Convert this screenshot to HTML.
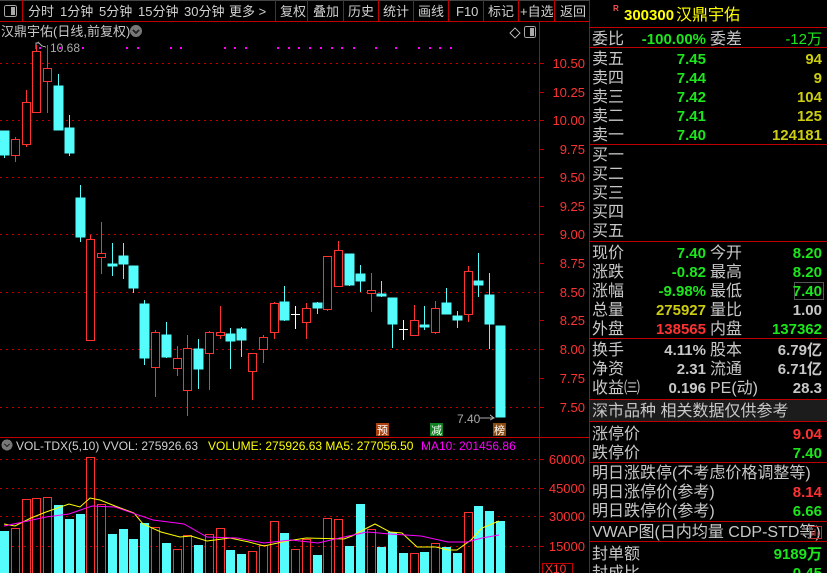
<!DOCTYPE html>
<html><head><meta charset="utf-8"><style>
html,body{margin:0;padding:0;background:#000;width:827px;height:573px;overflow:hidden}
svg{display:block}
text{font-family:"Liberation Sans","Noto Sans CJK SC",sans-serif}
</style></head><body>
<svg width="827" height="573" viewBox="0 0 827 573" xmlns="http://www.w3.org/2000/svg" shape-rendering="crispEdges" overflow="hidden">
<defs><clipPath id="c"><rect width="827" height="573"/></clipPath></defs>
<g clip-path="url(#c)">
<rect width="827" height="573" fill="#000"/>
<line x1="0" y1="0.5" x2="589" y2="0.5" stroke="#444"/>
<line x1="0" y1="21.5" x2="589" y2="21.5" stroke="#c00000"/>
<g stroke="#c00000">
<line x1="22.5" y1="0" x2="22.5" y2="21"/><line x1="275.5" y1="0" x2="275.5" y2="21"/><line x1="307.5" y1="0" x2="307.5" y2="21"/><line x1="343.5" y1="0" x2="343.5" y2="21"/><line x1="378.5" y1="0" x2="378.5" y2="21"/><line x1="413.5" y1="0" x2="413.5" y2="21"/><line x1="448.5" y1="0" x2="448.5" y2="21"/><line x1="483.5" y1="0" x2="483.5" y2="21"/><line x1="518.5" y1="0" x2="518.5" y2="21"/><line x1="554.5" y1="0" x2="554.5" y2="21"/>
</g>
<rect x="4.5" y="5.5" width="12" height="11" rx="2" fill="none" stroke="#aaa"/><rect x="11" y="7" width="4" height="8" fill="#aaa"/>
<g fill="#d0d0d0" font-size="13">
<text x="28" y="16">分时</text><text x="60" y="16">1分钟</text><text x="99" y="16">5分钟</text><text x="138" y="16">15分钟</text><text x="184" y="16">30分钟</text><text x="229" y="16">更多 &gt;</text>
<text x="280" y="16">复权</text><text x="313" y="16">叠加</text><text x="348" y="16">历史</text><text x="383" y="16">统计</text><text x="418" y="16">画线</text><text x="456" y="16">F10</text><text x="488" y="16">标记</text><text x="520" y="16">+自选</text><text x="560" y="16">返回</text>
</g>
<text x="1" y="36" fill="#c8c8c8" font-size="13">汉鼎宇佑(日线,前复权)</text>
<circle cx="136" cy="31" r="6" fill="#777"/><path d="M133 30l3 3 3-3" stroke="#222" stroke-width="1.5" fill="none"/>
<path d="M510 33l5-5 5 5-5 5z" fill="none" stroke="#aaa"/>
<rect x="524.5" y="26.5" width="11" height="11" rx="2" fill="none" stroke="#aaa"/><rect x="530" y="28" width="4" height="8" fill="#aaa"/>
<line x1="539.5" y1="22" x2="539.5" y2="573" stroke="#c00000"/>
<line x1="589.5" y1="0" x2="589.5" y2="573" stroke="#c00000"/>
<line x1="0" y1="437.5" x2="589" y2="437.5" stroke="#c00000"/>
<g stroke="#c00000" stroke-dasharray="2,4">
<line x1="0" y1="63.5" x2="539" y2="63.5"/><line x1="0" y1="120.5" x2="539" y2="120.5"/><line x1="0" y1="177.5" x2="539" y2="177.5"/><line x1="0" y1="234.5" x2="539" y2="234.5"/><line x1="0" y1="292.5" x2="539" y2="292.5"/><line x1="0" y1="349.5" x2="539" y2="349.5"/><line x1="0" y1="407.5" x2="539" y2="407.5"/>
<line x1="0" y1="459.5" x2="539" y2="459.5"/><line x1="0" y1="488.5" x2="539" y2="488.5"/><line x1="0" y1="516.5" x2="539" y2="516.5"/><line x1="0" y1="546.5" x2="539" y2="546.5"/>
</g>
<g stroke="#c00000">
<line x1="539" y1="63.5" x2="544" y2="63.5"/><line x1="539" y1="92.5" x2="544" y2="92.5"/><line x1="539" y1="120.5" x2="544" y2="120.5"/><line x1="539" y1="149.5" x2="544" y2="149.5"/><line x1="539" y1="177.5" x2="544" y2="177.5"/><line x1="539" y1="206.5" x2="544" y2="206.5"/><line x1="539" y1="234.5" x2="544" y2="234.5"/><line x1="539" y1="263.5" x2="544" y2="263.5"/><line x1="539" y1="292.5" x2="544" y2="292.5"/><line x1="539" y1="320.5" x2="544" y2="320.5"/><line x1="539" y1="349.5" x2="544" y2="349.5"/><line x1="539" y1="378.5" x2="544" y2="378.5"/><line x1="539" y1="407.5" x2="544" y2="407.5"/>
<line x1="539" y1="459.5" x2="544" y2="459.5"/><line x1="539" y1="488.5" x2="544" y2="488.5"/><line x1="539" y1="516.5" x2="544" y2="516.5"/><line x1="539" y1="546.5" x2="544" y2="546.5"/>
</g>
<g fill="#ff3232" font-size="13" text-anchor="end">
<text x="585" y="68">10.50</text><text x="585" y="97">10.25</text><text x="585" y="125">10.00</text><text x="585" y="154">9.75</text><text x="585" y="182">9.50</text><text x="585" y="211">9.25</text><text x="585" y="239">9.00</text><text x="585" y="268">8.75</text><text x="585" y="297">8.50</text><text x="585" y="325">8.25</text><text x="585" y="354">8.00</text><text x="585" y="383">7.75</text><text x="585" y="412">7.50</text>
<text x="585" y="464">60000</text><text x="585" y="493">45000</text><text x="585" y="521">30000</text><text x="585" y="551">15000</text>
</g>
<rect x="542.5" y="563.5" width="30" height="12" fill="none" stroke="#c00000"/><text x="545" y="573" fill="#ff3232" font-size="12">X10</text>
<g fill="#ff00ff">
<rect x="39" y="47" width="2" height="2"/><rect x="59" y="47" width="2" height="2"/><rect x="82" y="47" width="2" height="2"/><rect x="126" y="47" width="2" height="2"/><rect x="137" y="47" width="2" height="2"/><rect x="170" y="47" width="2" height="2"/><rect x="180" y="47" width="2" height="2"/><rect x="224" y="47" width="2" height="2"/><rect x="234" y="47" width="2" height="2"/><rect x="245" y="47" width="2" height="2"/><rect x="277" y="47" width="2" height="2"/><rect x="288" y="47" width="2" height="2"/><rect x="298" y="47" width="2" height="2"/><rect x="309" y="47" width="2" height="2"/><rect x="320" y="47" width="2" height="2"/><rect x="331" y="47" width="2" height="2"/><rect x="341" y="47" width="2" height="2"/><rect x="353" y="47" width="2" height="2"/><rect x="375" y="47" width="2" height="2"/><rect x="395" y="47" width="2" height="2"/><rect x="418" y="47" width="2" height="2"/><rect x="429" y="47" width="2" height="2"/><rect x="439" y="47" width="2" height="2"/><rect x="450" y="47" width="2" height="2"/>
</g>
<path d="M36 49v-6h3M38 42l4 4 4 1" stroke="#aaa" fill="none"/>
<text x="50" y="52" fill="#aaa" font-size="12">10.68</text>
<g stroke-width="1">
<g stroke="#ff3232" fill="#000">
<line x1="15.5" y1="137" x2="15.5" y2="162"/><rect x="11.5" y="139.5" width="8" height="16"/>
<line x1="26.5" y1="90" x2="26.5" y2="147"/><rect x="22.5" y="102.5" width="8" height="42"/>
<line x1="36.5" y1="45" x2="36.5" y2="113"/><rect x="32.5" y="51.5" width="8" height="61"/>
<line x1="47.5" y1="45" x2="47.5" y2="113"/><rect x="43.5" y="68.5" width="8" height="13"/>
<line x1="90.5" y1="235" x2="90.5" y2="341"/><rect x="86.5" y="239.5" width="8" height="101"/>
<line x1="101.5" y1="222" x2="101.5" y2="274"/><rect x="97.5" y="253.5" width="8" height="4"/>
<line x1="155.5" y1="330" x2="155.5" y2="397"/><rect x="151.5" y="332.5" width="8" height="35"/>
<line x1="177.5" y1="346" x2="177.5" y2="376"/><rect x="173.5" y="358.5" width="8" height="10"/>
<line x1="187.5" y1="335" x2="187.5" y2="416"/><rect x="183.5" y="348.5" width="8" height="42"/>
<line x1="209.5" y1="331" x2="209.5" y2="390"/><rect x="205.5" y="332.5" width="8" height="21"/>
<line x1="220.5" y1="306" x2="220.5" y2="339"/><rect x="216.5" y="332.5" width="8" height="3"/>
<line x1="252.5" y1="353" x2="252.5" y2="400"/><rect x="248.5" y="353.5" width="8" height="18"/>
<line x1="263.5" y1="335" x2="263.5" y2="363"/><rect x="259.5" y="337.5" width="8" height="12"/>
<line x1="274.5" y1="302" x2="274.5" y2="339"/><rect x="270.5" y="303.5" width="8" height="29"/>
<line x1="306.5" y1="303" x2="306.5" y2="339"/><rect x="302.5" y="308.5" width="8" height="14"/>
<line x1="327.5" y1="256" x2="327.5" y2="311"/><rect x="323.5" y="256.5" width="8" height="53"/>
<line x1="338.5" y1="241" x2="338.5" y2="287"/><rect x="334.5" y="250.5" width="8" height="36"/>
<line x1="371.5" y1="273" x2="371.5" y2="312"/><rect x="367.5" y="290.5" width="8" height="3"/>
<line x1="414.5" y1="305" x2="414.5" y2="336"/><rect x="410.5" y="320.5" width="8" height="15"/>
<line x1="435.5" y1="301" x2="435.5" y2="334"/><rect x="431.5" y="308.5" width="8" height="24"/>
<line x1="468.5" y1="266" x2="468.5" y2="322"/><rect x="464.5" y="271.5" width="8" height="43"/>
</g>
<g stroke="#54fcfc" fill="#54fcfc">
<line x1="4.5" y1="131" x2="4.5" y2="158"/><rect x="0" y="131" width="9" height="24"/>
<line x1="58.5" y1="74" x2="58.5" y2="130"/><rect x="54" y="86" width="9" height="44"/>
<line x1="69.5" y1="115" x2="69.5" y2="156"/><rect x="65" y="128" width="9" height="25"/>
<line x1="80.5" y1="185" x2="80.5" y2="242"/><rect x="76" y="198" width="9" height="39"/>
<line x1="112.5" y1="243" x2="112.5" y2="276"/><rect x="108" y="264" width="9" height="2"/>
<line x1="123.5" y1="243" x2="123.5" y2="279"/><rect x="119" y="256" width="9" height="8"/>
<line x1="133.5" y1="266" x2="133.5" y2="293"/><rect x="129" y="266" width="9" height="22"/>
<line x1="144.5" y1="300" x2="144.5" y2="365"/><rect x="140" y="304" width="9" height="54"/>
<line x1="166.5" y1="322" x2="166.5" y2="358"/><rect x="162" y="335" width="9" height="22"/>
<line x1="198.5" y1="339" x2="198.5" y2="389"/><rect x="194" y="349" width="9" height="20"/>
<line x1="230.5" y1="328" x2="230.5" y2="369"/><rect x="226" y="334" width="9" height="7"/>
<line x1="241.5" y1="327" x2="241.5" y2="357"/><rect x="237" y="329" width="9" height="11"/>
<line x1="284.5" y1="286" x2="284.5" y2="321"/><rect x="280" y="302" width="9" height="18"/>
<line x1="317.5" y1="302" x2="317.5" y2="314"/><rect x="313" y="303" width="9" height="5"/>
<line x1="349.5" y1="254" x2="349.5" y2="286"/><rect x="345" y="254" width="9" height="31"/>
<line x1="360.5" y1="265" x2="360.5" y2="292"/><rect x="356" y="274" width="9" height="7"/>
<line x1="381.5" y1="281" x2="381.5" y2="297"/><rect x="377" y="294" width="9" height="2"/>
<line x1="392.5" y1="298" x2="392.5" y2="348"/><rect x="388" y="298" width="9" height="26"/>
<line x1="424.5" y1="306" x2="424.5" y2="330"/><rect x="420" y="325" width="9" height="2"/>
<line x1="446.5" y1="288" x2="446.5" y2="314"/><rect x="442" y="303" width="9" height="11"/>
<line x1="457.5" y1="311" x2="457.5" y2="328"/><rect x="453" y="316" width="9" height="4"/>
<line x1="478.5" y1="253" x2="478.5" y2="297"/><rect x="474" y="281" width="9" height="4"/>
<line x1="489.5" y1="273" x2="489.5" y2="349"/><rect x="485" y="295" width="9" height="29"/>
<rect x="496" y="326" width="9" height="91"/>
</g>
<g stroke="#fff">
<line x1="295.5" y1="306" x2="295.5" y2="329"/><line x1="291" y1="314.5" x2="300" y2="314.5"/>
<line x1="403.5" y1="320" x2="403.5" y2="340"/><line x1="399" y1="329.5" x2="408" y2="329.5"/>
</g>
</g>
<text x="457" y="423" fill="#aaa" font-size="12">7.40</text><path d="M480 418h14M490 415l4 3-4 2" stroke="#aaa" fill="none"/>
<rect x="376" y="423" width="13" height="13" fill="#a84010"/><text x="377" y="434" fill="#fff" font-size="11">预</text>
<rect x="430" y="423" width="13" height="13" fill="#108020"/><text x="431" y="434" fill="#fff" font-size="11">减</text>
<rect x="493" y="423" width="13" height="13" fill="#8a4a10"/><text x="494" y="434" fill="#fff" font-size="11">榜</text>
<circle cx="7" cy="445" r="5.5" fill="#777"/><path d="M4.5 444l2.5 2.5 2.5-2.5" stroke="#222" fill="none"/>
<text x="16" y="450" font-size="12" fill="#d0d0d0">VOL-TDX(5,10) VVOL: 275926.63</text>
<text x="208" y="450" font-size="12" fill="#ffff00">VOLUME: 275926.63  MA5: 277056.50</text>
<text x="421" y="450" font-size="12" fill="#ff00ff">MA10: 201456.86</text>
<g fill="#54fcfc">
<rect x="0" y="531" width="9" height="42"/><rect x="54" y="505" width="9" height="68"/><rect x="65" y="519" width="9" height="54"/><rect x="76" y="514" width="9" height="59"/><rect x="108" y="534" width="9" height="39"/><rect x="119" y="529" width="9" height="44"/><rect x="129" y="539" width="9" height="34"/><rect x="140" y="523" width="9" height="50"/><rect x="162" y="543" width="9" height="30"/><rect x="194" y="545" width="9" height="28"/><rect x="226" y="550" width="9" height="23"/><rect x="237" y="554" width="9" height="19"/><rect x="280" y="533" width="9" height="40"/><rect x="313" y="555" width="9" height="18"/><rect x="345" y="546" width="9" height="27"/><rect x="356" y="504" width="9" height="69"/><rect x="377" y="547" width="9" height="26"/><rect x="388" y="532" width="9" height="41"/><rect x="399" y="553" width="9" height="20"/><rect x="420" y="552" width="9" height="21"/><rect x="442" y="547" width="9" height="26"/><rect x="453" y="553" width="9" height="20"/><rect x="474" y="506" width="9" height="67"/><rect x="485" y="511" width="9" height="62"/><rect x="496" y="521" width="9" height="52"/>
</g>
<g fill="none" stroke="#ff3232">
<path d="M11.5 573V528.5h8V573M22.5 573V499.5h8V573M32.5 573V498.5h8V573M43.5 573V497.5h8V573M86.5 573V457.5h8V573M97.5 573V504.5h8V573M151.5 573V527.5h8V573M173.5 573V549.5h8V573M183.5 573V535.5h8V573M205.5 573V534.5h8V573M216.5 573V528.5h8V573M248.5 573V551.5h8V573M259.5 573V545.5h8V573M270.5 573V521.5h8V573M291.5 573V549.5h8V573M302.5 573V539.5h8V573M323.5 573V518.5h8V573M334.5 573V519.5h8V573M367.5 573V529.5h8V573M410.5 573V553.5h8V573M431.5 573V543.5h8V573M464.5 573V512.5h8V573"/>
</g>
<g shape-rendering="auto" fill="none">
<polyline stroke="#ffff00" points="4,524 15,526 31,518 46,512 69,504 80,507 90,498 100,500 115,506 134,513 143,524 161,532 180,537 191,536 207,541 230,538 249,542 264,546 287,541 306,538 344,539 352,536 367,528 375,524 390,532 402,533 417,547 436,547 448,550 457,550 471,540 482,528 499,521"/>
<polyline stroke="#ff00ff" points="4,526 23,522 46,517 69,514 92,506 115,507 153,520 184,524 207,537 237,538 264,543 291,540 318,543 344,537 367,532 390,534 421,536 448,542 467,542 482,538 499,535"/>
</g>
<g stroke="#c00000">
<line x1="590" y1="27.5" x2="827" y2="27.5"/><line x1="590" y1="47.5" x2="827" y2="47.5"/><line x1="590" y1="144.5" x2="827" y2="144.5"/><line x1="590" y1="241.5" x2="827" y2="241.5"/><line x1="590" y1="338.5" x2="827" y2="338.5"/><line x1="590" y1="399.5" x2="827" y2="399.5"/><line x1="590" y1="421.5" x2="827" y2="421.5"/><line x1="590" y1="462.5" x2="827" y2="462.5"/><line x1="590" y1="521.5" x2="827" y2="521.5"/><line x1="590" y1="541.5" x2="827" y2="541.5"/>
</g>
<rect x="590" y="400" width="237" height="21" fill="#1c1c1c"/>
<text x="613" y="11" fill="#ff5050" font-size="8" font-weight="bold">R</text>
<text x="624" y="20" fill="#ffff00" font-size="15" font-weight="bold">300300</text><text x="676" y="20" fill="#ffff00" font-size="16">汉鼎宇佑</text>
<g fill="#c8c8c8" font-size="16">
<text x="592" y="44">委比</text><text x="710" y="44">委差</text>
<text x="592" y="64">卖五</text><text x="592" y="83">卖四</text><text x="592" y="102">卖三</text><text x="592" y="121">卖二</text><text x="592" y="140">卖一</text>
<text x="592" y="160">买一</text><text x="592" y="179">买二</text><text x="592" y="198">买三</text><text x="592" y="217">买四</text><text x="592" y="236">买五</text>
<text x="592" y="258">现价</text><text x="710" y="258">今开</text>
<text x="592" y="277">涨跌</text><text x="710" y="277">最高</text>
<text x="592" y="296">涨幅</text><text x="710" y="296">最低</text>
<text x="592" y="315">总量</text><text x="710" y="315">量比</text>
<text x="592" y="334">外盘</text><text x="710" y="334">内盘</text>
<text x="592" y="355">换手</text><text x="710" y="355">股本</text>
<text x="592" y="374">净资</text><text x="710" y="374">流通</text>
<text x="592" y="393">收益㈢</text><text x="710" y="393">PE(动)</text>
<text x="592" y="416">深市品种  相关数据仅供参考</text>
<text x="592" y="439">涨停价</text><text x="592" y="458">跌停价</text>
<text x="592" y="478">明日涨跌停(不考虑价格调整等)</text>
<text x="592" y="497">明日涨停价(参考)</text><text x="592" y="516">明日跌停价(参考)</text>
<text x="592" y="537">VWAP图(日内均量 CDP-STD等)</text>
<text x="592" y="559">封单额</text><text x="592" y="578">封成比</text>
</g>
<rect x="809.5" y="526.5" width="12" height="12" fill="none" stroke="#c03030"/><path d="M812 536v-5M815 536v-7M818 536v-4" stroke="#c03030"/>
<rect x="794.5" y="282.5" width="29" height="17" fill="none" stroke="#555"/>
<g font-size="15" font-weight="bold" text-anchor="end">
<g fill="#1ce61c">
<text x="706" y="44">-100.00%</text><text x="822" y="44" font-weight="normal">-12万</text>
<text x="706" y="64">7.45</text><text x="706" y="83">7.44</text><text x="706" y="102">7.42</text><text x="706" y="121">7.41</text><text x="706" y="140">7.40</text>
<text x="706" y="258">7.40</text><text x="822" y="258">8.20</text>
<text x="706" y="277">-0.82</text><text x="822" y="277">8.20</text>
<text x="706" y="296">-9.98%</text><text x="822" y="296">7.40</text>
<text x="822" y="334">137362</text>
<text x="822" y="458">7.40</text><text x="822" y="516">6.66</text>
<text x="822" y="559">9189万</text><text x="822" y="578">0.45</text>
</g>
<g fill="#cccc10">
<text x="822" y="64">94</text><text x="822" y="83">9</text><text x="822" y="102">104</text><text x="822" y="121">125</text><text x="822" y="140">124181</text>
<text x="706" y="315">275927</text>
</g>
<g fill="#ff3232">
<text x="706" y="334">138565</text><text x="822" y="439">9.04</text><text x="822" y="497">8.14</text>
</g>
<g fill="#c8c8c8">
<text x="822" y="315">1.00</text>
<text x="706" y="355">4.11%</text><text x="822" y="355">6.79亿</text>
<text x="706" y="374">2.31</text><text x="822" y="374">6.71亿</text>
<text x="706" y="393">0.196</text><text x="822" y="393">28.3</text>
</g>
</g>
</g>
</svg>
</body></html>
